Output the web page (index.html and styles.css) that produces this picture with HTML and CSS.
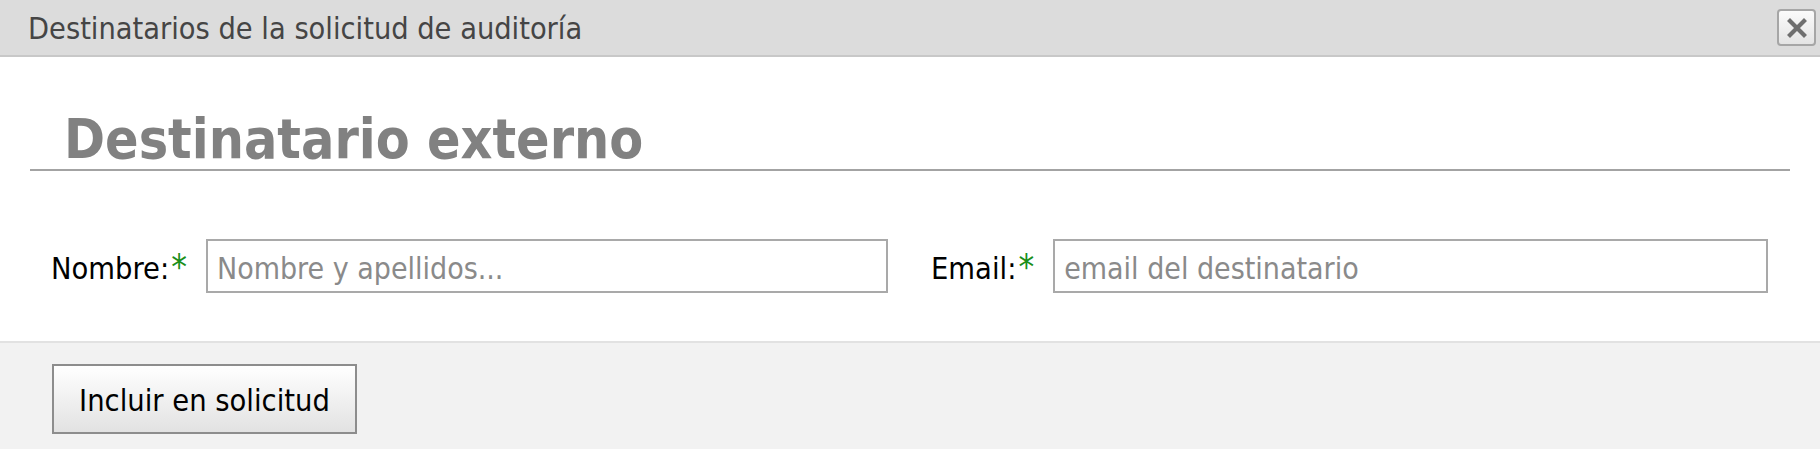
FILE: index.html
```html
<!DOCTYPE html>
<html lang="es">
<head>
<meta charset="utf-8">
<title>Destinatarios de la solicitud de auditoría</title>
<link rel="stylesheet" href="styles.css">
</head>
<body>
<div class="dialog">
  <div class="titlebar">
    <span class="title">Destinatarios de la solicitud de auditoría</span>
    <button class="close" type="button" aria-label="Cerrar">
      <svg width="22" height="20" viewBox="0 0 22 20"><path d="M4 3 L18 17 M18 3 L4 17" stroke="#6f6f6f" stroke-width="4.2" stroke-linecap="square" fill="none"/></svg>
    </button>
  </div>
  <div class="content">
    <h2 class="section-title">Destinatario externo</h2>
    <div class="form-row">
      <div class="field">
        <label class="label" for="nombre">Nombre:<span class="req">*</span></label>
        <input class="input" id="nombre" type="text" placeholder="Nombre y apellidos...">
      </div>
      <div class="field">
        <label class="label" for="email">Email:<span class="req">*</span></label>
        <input class="input" id="email" type="text" placeholder="email del destinatario">
      </div>
    </div>
  </div>
  <div class="footer">
    <button class="btn" type="button">Incluir en solicitud</button>
  </div>
</div>
</body>
</html>
```
FILE: styles.css
```css
html, body {
  margin: 0;
  padding: 0;
  background: #ffffff;
}
body {
  font-family: "DejaVu Sans Condensed", "DejaVu Sans", sans-serif;
  font-size: 30px;
  width: 1820px;
  height: 449px;
  overflow: hidden;
}
.dialog {
  display: flex;
  flex-direction: column;
  height: 449px;
}
.titlebar {
  height: 55px;
  background: #dcdcdc;
  border-bottom: 2px solid #c8c8c8;
  display: flex;
  align-items: center;
  justify-content: space-between;
  padding: 0 4px 0 28px;
}
.title {
  color: #454545;
  font-size: 30.4px;
  line-height: 1;
  padding-top: 4px;
}
.close {
  width: 39px;
  height: 37px;
  margin-top: 0;
  padding: 0;
  border: 2px solid #a6a6a6;
  border-radius: 4px;
  background: linear-gradient(#fbfbfb, #e4e4e4);
  display: flex;
  align-items: center;
  justify-content: center;
}
.close svg {
  display: block;
}
.content {
  padding: 0 30px;
}
.section-title {
  margin: 52px 0 0 0;
  padding-left: 34px;
  font-size: 55px;
  line-height: 60px;
  font-weight: bold;
  color: #818181;
  border-bottom: 2px solid #a3a3a3;
}
.form-row {
  display: grid;
  grid-template-columns: 1fr 1fr;
  column-gap: 43px;
  margin: 68px 22px 48px 21px;
}
.field {
  display: flex;
  align-items: center;
  gap: 19px;
}
.label {
  color: #000;
  font-size: 30.5px;
  white-space: nowrap;
  padding-top: 4px;
  display: flex;
  align-items: flex-start;
}
.req {
  color: #1a8f1a;
  margin-left: 2px;
  font-size: 35px;
  line-height: 1;
  margin-top: -1px;
}
.input {
  flex: 1;
  min-width: 0;
  height: 54px;
  box-sizing: border-box;
  border: 2px solid #a9a9a9;
  padding: 4px 8px 0 9px;
  font-family: "DejaVu Sans Condensed", "DejaVu Sans", sans-serif;
  font-size: 30px;
  color: #333;
  background: #fff;
  outline: none;
}
.input::placeholder {
  color: #8a8a8a;
}
.footer {
  flex: 1;
  background: #f2f2f2;
  border-top: 2px solid #e2e2e2;
  padding: 21px 0 0 52px;
}
.btn {
  width: 305px;
  height: 70px;
  box-sizing: border-box;
  border: 2px solid #8d8d8d;
  background: linear-gradient(#ffffff, #e2e2e2);
  font-family: "DejaVu Sans Condensed", "DejaVu Sans", sans-serif;
  font-size: 30.5px;
  color: #000;
  padding: 2px 0 0 0;
}
```
